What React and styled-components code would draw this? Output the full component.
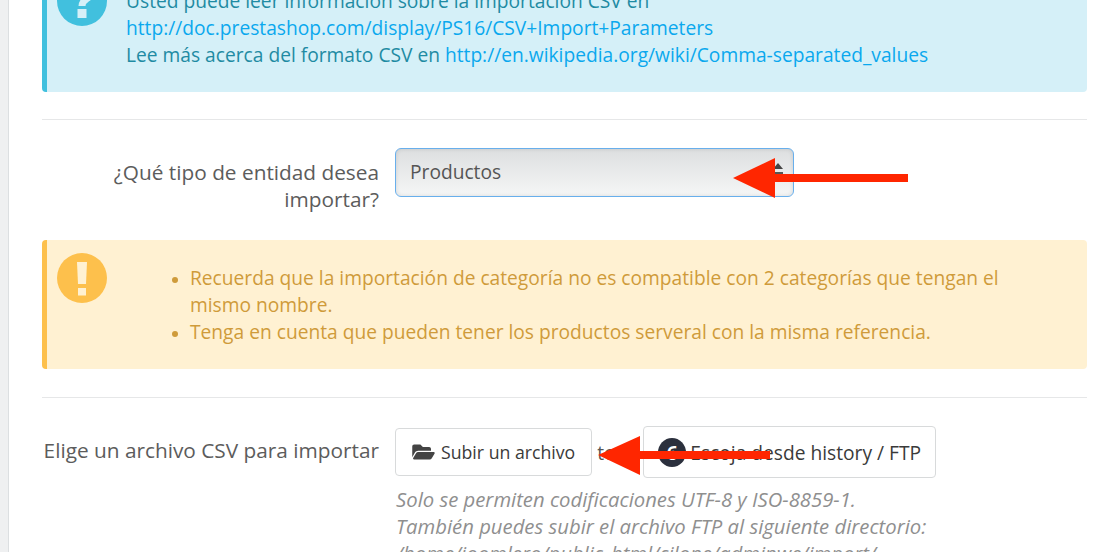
import React from "react";
import styled, { createGlobalStyle } from "styled-components";
import { FaFolderOpen } from "react-icons/fa";

const GlobalStyle = createGlobalStyle`
  html, body {
    margin: 0;
    padding: 0;
    height: 552px;
    overflow: hidden;
    background: #fff;
  }
  body {
    font-family: "Open Sans", "Noto Sans", sans-serif;
    font-size: 19.2px;
    line-height: 27px;
    color: #555;
  }
`;

const Page = styled.div`
  position: relative;
  display: flex;
  width: 1100px;
  height: 552px;
  overflow: hidden;
`;

const Gutter = styled.div`
  width: 8px;
  flex: none;
  background: #eff0f1;
  border-right: 1px solid #dcdfe1;
`;

const Panel = styled.main`
  flex: 1;
  padding: 0 13px 0 33px;
  margin-top: -37px;
`;

const Alert = styled.div`
  display: flex;
  padding: 24px 0;
  border-left: 5px solid ${({ $accent }) => $accent};
  border-radius: 4px;
  background: ${({ $bg }) => $bg};
  color: ${({ $color }) => $color};
`;

const AlertIcon = styled.svg`
  flex: none;
  width: 50px;
  height: 50px;
  margin: -11px 0 0 10px;
`;

const AlertBody = styled.div`
  margin-left: 19px;
`;

const Link = styled.a`
  color: #0aa8ee;
  text-decoration: none;
`;

const Rule = styled.hr`
  border: 0;
  border-top: 1px solid #e6e7e8;
  margin: ${({ $m }) => $m};
`;

const FormRow = styled.div`
  display: grid;
  grid-template-columns: 337px 1fr;
  column-gap: 16px;
  margin-bottom: ${({ $mb }) => $mb || 0};
`;

const Label = styled.label`
  text-align: right;
  padding-top: ${({ $pt }) => $pt};
  font-size: 20.8px;
  color: #5c5c5c;
`;

const Select = styled.div`
  box-sizing: border-box;
  width: 399px;
  height: 49px;
  padding: 9px 10px 9px 14px;
  border: 1px solid #68afec;
  border-radius: 6px;
  background: linear-gradient(#dddfe0, #f5f6f6);
  box-shadow: inset 0 0 4px rgba(0, 0, 0, 0.12);
  display: flex;
  justify-content: space-between;
`;

const Caret = styled.span`
  width: 10px;
  margin-top: 5px;
  height: 10px;
  &::before {
    content: "";
    display: block;
    border-left: 5px solid transparent;
    border-right: 5px solid transparent;
    border-bottom: 6px solid #444;
  }
  &::after {
    content: "";
    display: block;
    margin-top: 3px;
    height: 2px;
    background: #555;
  }
`;

const ErrorList = styled.ul`
  margin: 0 0 0 35px;
  padding: 0 0 0 48px;
  width: 830px;
  li::marker {
    font-size: 16px;
  }
`;

const Controls = styled.div`
  display: flex;
  align-items: center;
  height: 52px;
`;

const Button = styled.button`
  box-sizing: border-box;
  display: flex;
  align-items: center;
  height: ${({ $h }) => $h};
  padding: 0 ${({ $px }) => $px};
  border: 1px solid #d8dadb;
  border-radius: 4px;
  background: #fff;
  color: #3a3a3a;
  font: inherit;
  font-size: ${({ $fs }) => $fs};
  white-space: nowrap;
  svg {
    width: 23px;
    height: 20px;
    margin-right: 6px;
    color: #444;
  }
`;

const Or = styled.span`
  width: 51px;
  padding-left: 5px;
  box-sizing: border-box;
`;

const Badge = styled.span`
  flex: none;
  width: 28px;
  height: 29px;
  margin-right: 4px;
  border-radius: 50%;
  background: #2b303d;
  color: #fff;
  font-weight: 700;
  display: flex;
  align-items: center;
  justify-content: center;
`;

const Help = styled.p`
  margin: 8px 0 0 1px;
  color: #8f8f8f;
  font-style: italic;
  font-size: 20.3px;
  white-space: nowrap;
`;

const ArrowLayer = styled.svg`
  position: absolute;
  left: 0;
  top: 0;
  pointer-events: none;
`;

export default function App() {
  return (
    <>
      <GlobalStyle />
      <Page>
        <Gutter />
        <Panel>
          <Alert $accent="#41c0de" $bg="#d5f0f8" $color="#1f8ba3">
            <AlertIcon viewBox="0 0 50 50">
              <circle cx="25" cy="25" r="25" fill="#41c0de" />
              <path d="M16 17C16 5 35 5 35 15C35 23 25 22 25 30" fill="none" stroke="#d5f0f8" strokeWidth="7" />
              <rect x="20.5" y="33" width="9" height="9" fill="#d5f0f8" />
            </AlertIcon>
            <AlertBody>
              Usted puede leer información sobre la importación CSV en
              <br />
              <Link>http://doc.prestashop.com/display/PS16/CSV+Import+Parameters</Link>
              <br />
              Lee más acerca del formato CSV en{" "}
              <Link>http://en.wikipedia.org/wiki/Comma-separated_values</Link>
            </AlertBody>
          </Alert>

          <Rule $m="27px 0 28px" />

          <FormRow $mb="27px">
            <Label $pt="11px">¿Qué tipo de entidad desea importar?</Label>
            <Select>
              Productos
              <Caret />
            </Select>
          </FormRow>

          <Alert $accent="#fdc04c" $bg="#fff1d2" $color="#cf9b3a">
            <AlertIcon viewBox="0 0 50 50">
              <circle cx="25" cy="25" r="25" fill="#fdc04c" />
              <polygon points="20,9 30,9 29,31 21,31" fill="#fff1d2" />
              <rect x="21" y="35" width="8" height="7.5" fill="#fff1d2" />
            </AlertIcon>
            <ErrorList>
              <li>
                Recuerda que la importación de categoría no es compatible con 2 categorías que tengan el mismo nombre.
              </li>
              <li>Tenga en cuenta que pueden tener los productos serveral con la misma referencia.</li>
            </ErrorList>
          </Alert>

          <Rule $m="28px 0" />

          <FormRow>
            <Label $pt="11px">Elige un archivo CSV para importar</Label>
            <div>
              <Controls>
                <Button $h="48px" $px="16px" $fs="17.7px">
                  <FaFolderOpen />
                  Subir un archivo
                </Button>
                <Or>total</Or>
                <Button $h="52px" $px="14px" $fs="19.2px">
                  <Badge>6</Badge>
                  Escoja desde history / FTP
                </Button>
              </Controls>
              <Help>
                Solo se permiten codificaciones UTF-8 y ISO-8859-1.
                <br />
                También puedes subir el archivo FTP al siguiente directorio:
                <br />
                /home/joomlero/public_html/cilone/adminwe/import/
              </Help>
            </div>
          </FormRow>
        </Panel>
        <ArrowLayer width="1100" height="552" viewBox="0 0 1100 552">
          <polygon points="733,178 775,158 775,174 908,174 908,182 775,182 775,198" fill="#ff2600" />
          <polygon points="598,455 640,436 640,451 770,451 770,459 640,459 640,475" fill="#ff2600" />
        </ArrowLayer>
      </Page>
    </>
  );
}
